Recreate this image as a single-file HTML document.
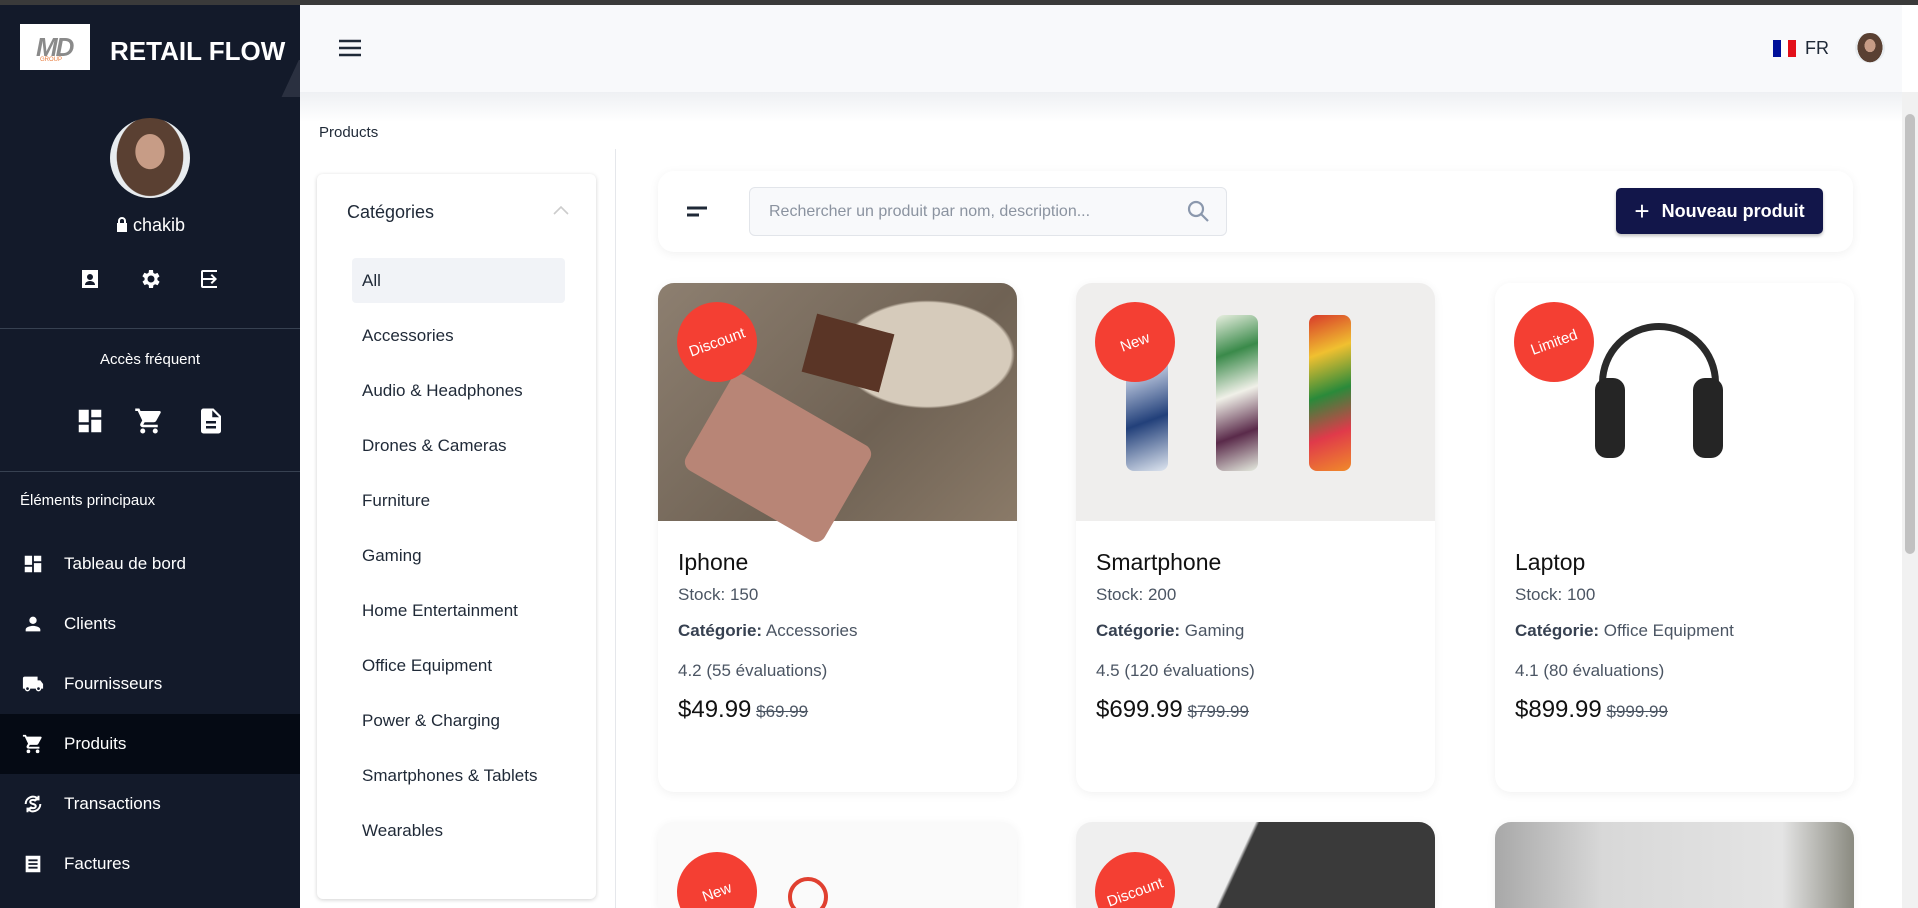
<!DOCTYPE html>
<html><head><meta charset="utf-8"><style>
*{box-sizing:border-box;margin:0;padding:0}
html,body{width:1918px;height:908px;overflow:hidden}
body{background:#fff;font-family:"Liberation Sans",sans-serif;position:relative;color:#1f2937}
.abs{position:absolute}
.topline{left:0;top:0;width:1918px;height:5px;background:#3a3a3a}
.side{left:0;top:5px;width:300px;height:903px;background:#131a2a;color:#fff}
.topbar{left:300px;top:5px;width:1602px;height:87px;background:#f8f9fb}
.shadowband{left:300px;top:92px;width:1602px;height:30px;background:linear-gradient(#eef0f3,#fff)}
.sb{left:1902px;top:92px;width:16px;height:816px;background:#f1f1f1}
.nav{left:0;width:300px;height:60px;display:flex;align-items:center;font-size:17px}
.nav svg{position:absolute;left:22px}
.nav span{position:absolute;left:64px}
.cat{left:362px;font-size:17px;color:#1f2937}
.card{width:359px;height:509px;background:#fff;border-radius:16px;box-shadow:0 2px 10px rgba(0,0,0,.06);overflow:hidden}
.img{position:absolute;left:0;top:0;width:359px;height:238px}
.badge{position:absolute;left:19px;top:19px;width:80px;height:80px;border-radius:50%;background:#f43f33;color:#fff;font-size:15px;display:flex;align-items:center;justify-content:center}
.badge b{font-weight:normal;transform:rotate(-20deg)}
.t{position:absolute;left:20px;top:266px;font-size:23px;color:#111}
.s{position:absolute;left:20px;font-size:17px;color:#4b5563}
</style></head><body>
<div class="abs topline"></div>
<div class="abs side">
 <div class="abs" style="left:20px;top:19px;width:70px;height:46px;background:#fff"><div style="position:absolute;left:16px;top:8px;font:italic bold 26px 'Liberation Sans';color:#8a8a8a;letter-spacing:-2px">MD</div><div style="position:absolute;left:20px;top:33px;font-size:6px;color:#e87a3a">GROUP</div></div>
 <div class="abs" style="left:110px;top:31px;font-size:26px;font-weight:bold;white-space:nowrap">RETAIL FLOW</div>
 <div class="abs" style="left:280px;top:55px;width:20px;height:37px;background:linear-gradient(115deg,transparent 50%,#2a3040 51%)"></div>
 <div class="abs" style="left:110px;top:113px;width:80px;height:80px;border-radius:50%;background:radial-gradient(ellipse 30% 36% at 50% 42%,#c79c86 0 60%,transparent 62%),radial-gradient(ellipse 42% 50% at 50% 48%,#5a4032 0 98%,transparent 100%),#e8ecef"></div>
 <div class="abs" style="left:0;top:210px;width:300px;text-align:center;font-size:18px"><svg width="14" height="16" viewBox="0 0 14 16" style="vertical-align:-1px;margin-right:4px"><path d="M3 7V5a4 4 0 0 1 8 0v2h1v9H2V7zm2 0h4V5a2 2 0 0 0-4 0z" fill="#fff"/></svg>chakib</div>
 <svg class="abs" style="left:78px;top:262px" width="24" height="24" viewBox="0 0 24 24" fill="#fff"><path d="M4 3h16v18H4z M12 7a3 3 0 1 0 0 6 3 3 0 0 0 0-6zM7 18h10c0-3-3-4-5-4s-5 1-5 4z" fill-rule="evenodd"/></svg>
 <svg class="abs" style="left:138px;top:262px" width="24" height="24" viewBox="0 0 24 24" fill="#fff"><path d="M19.4 13a7.5 7.5 0 0 0 0-2l2.1-1.6-2-3.5-2.5 1a7 7 0 0 0-1.7-1L15 3h-4l-.4 2.7a7 7 0 0 0-1.7 1l-2.5-1-2 3.5L6.6 11a7.5 7.5 0 0 0 0 2l-2.1 1.6 2 3.5 2.5-1a7 7 0 0 0 1.7 1L11 21h4l.4-2.7a7 7 0 0 0 1.7-1l2.5 1 2-3.5zM13 15.5a3.5 3.5 0 1 1 0-7 3.5 3.5 0 0 1 0 7z"/></svg>
 <svg class="abs" style="left:198px;top:262px" width="24" height="24" viewBox="0 0 24 24" fill="#fff"><path d="M10 17l1.4-1.4L8.8 13H19v-2H8.8l2.6-2.6L10 7l-5 5zM5 3h14a2 2 0 0 1 2 2v14a2 2 0 0 1-2 2H5v-2h14V5H5z" transform="matrix(-1 0 0 1 24 0)"/></svg>
 <div class="abs" style="left:0;top:323px;width:300px;height:1px;background:#374151"></div>
 <div class="abs" style="left:0;top:346px;width:300px;text-align:center;font-size:15px">Accès fréquent</div>
 <svg class="abs" style="left:75px;top:401px" width="30" height="30" viewBox="0 0 24 24" fill="#fff"><path d="M3 13h8V3H3zm0 8h8v-6H3zm10 0h8V11h-8zm0-18v6h8V3z"/></svg>
 <svg class="abs" style="left:134px;top:401px" width="30" height="30" viewBox="0 0 24 24" fill="#fff"><path d="M7 18a2 2 0 1 0 0 4 2 2 0 0 0 0-4zM1 2v2h2l3.6 7.6-1.4 2.4A2 2 0 0 0 7 17h12v-2H7.4l1.1-2h7.5a2 2 0 0 0 1.7-1l3.6-6.5A1 1 0 0 0 20.4 4H5.2l-.9-2zm16 16a2 2 0 1 0 0 4 2 2 0 0 0 0-4z"/></svg>
 <svg class="abs" style="left:196px;top:401px" width="30" height="30" viewBox="0 0 24 24" fill="#fff"><path d="M14 2H6a2 2 0 0 0-2 2v16a2 2 0 0 0 2 2h12a2 2 0 0 0 2-2V8zm2 16H8v-2h8zm0-4H8v-2h8zm-3-5V3.5L18.5 9z"/></svg>
 <div class="abs" style="left:0;top:466px;width:300px;height:1px;background:#374151"></div>
 <div class="abs" style="left:20px;top:487px;font-size:15px">Éléments principaux</div>
 <div class="abs nav" style="top:529px"><svg width="22" height="22" viewBox="0 0 24 24" fill="#fff"><path d="M3 13h8V3H3zm0 8h8v-6H3zm10 0h8V11h-8zm0-18v6h8V3z"/></svg><span>Tableau de bord</span></div>
 <div class="abs nav" style="top:589px"><svg width="22" height="22" viewBox="0 0 24 24" fill="#fff"><path d="M12 12a4 4 0 1 0 0-8 4 4 0 0 0 0 8zm0 2c-2.7 0-8 1.3-8 4v2h16v-2c0-2.7-5.3-4-8-4z"/></svg><span>Clients</span></div>
 <div class="abs nav" style="top:649px"><svg width="22" height="22" viewBox="0 0 24 24" fill="#fff"><path d="M20 8h-3V4H3a2 2 0 0 0-2 2v11h2a3 3 0 0 0 6 0h6a3 3 0 0 0 6 0h2v-5zM6 18.5a1.5 1.5 0 1 1 0-3 1.5 1.5 0 0 1 0 3zm12 0a1.5 1.5 0 1 1 0-3 1.5 1.5 0 0 1 0 3z"/></svg><span>Fournisseurs</span></div>
 <div class="abs nav" style="top:709px;background:#050a14"><svg width="22" height="22" viewBox="0 0 24 24" fill="#fff"><path d="M7 18a2 2 0 1 0 0 4 2 2 0 0 0 0-4zM1 2v2h2l3.6 7.6-1.4 2.4A2 2 0 0 0 7 17h12v-2H7.4l1.1-2h7.5a2 2 0 0 0 1.7-1l3.6-6.5A1 1 0 0 0 20.4 4H5.2l-.9-2zm16 16a2 2 0 1 0 0 4 2 2 0 0 0 0-4z"/></svg><span>Produits</span></div>
 <div class="abs nav" style="top:769px"><svg width="22" height="22" viewBox="0 0 24 24" fill="none" stroke="#fff" stroke-width="2.2"><path d="M4 12a8 8 0 0 1 14-5.3M20 12a8 8 0 0 1-14 5.3M18 3v4h-4M6 21v-4h4M15 9c-.5-1-1.6-1.5-3-1.5-2 0-3 1-3 2.2 0 3 6 1.6 6 4.6 0 1.2-1 2.2-3 2.2-1.5 0-2.5-.6-3-1.5"/></svg><span>Transactions</span></div>
 <div class="abs nav" style="top:829px"><svg width="22" height="22" viewBox="0 0 24 24" fill="#fff"><path d="M4 3h16v18H4zm3 4v2h10V7zm0 4v2h10v-2zm0 4v2h10v-2z" fill-rule="evenodd"/></svg><span>Factures</span></div>
</div>
<div class="abs topbar">
 <svg class="abs" style="left:38px;top:33px" width="24" height="20" viewBox="0 0 24 20"><path d="M1 3h22M1 10h22M1 17h22" stroke="#1f2937" stroke-width="2.4"/></svg>
 <div class="abs" style="left:1473px;top:35px;width:8px;height:17px;background:#00109a"></div>
 <div class="abs" style="left:1481px;top:35px;width:7px;height:17px;background:#fff"></div>
 <div class="abs" style="left:1488px;top:35px;width:8px;height:17px;background:#e3101a"></div>
 <div class="abs" style="left:1505px;top:33px;font-size:18px;color:#1f2937">FR</div>
 <div class="abs" style="left:1555px;top:28px;width:30px;height:30px;border-radius:50%;background:radial-gradient(ellipse 30% 36% at 50% 42%,#c79c86 0 60%,transparent 62%),radial-gradient(ellipse 42% 50% at 50% 48%,#5a4032 0 98%,transparent 100%),#e8ecef"></div>
</div>
<div class="abs shadowband"></div>
<div class="abs sb"><div style="position:absolute;left:3px;top:22px;width:10px;height:440px;background:#c1c1c1;border-radius:5px"></div></div>
<div class="abs" style="left:319px;top:124px;font-size:15px">Products</div>
<div class="abs" style="left:615px;top:149px;width:1px;height:759px;background:#e5e7eb"></div>
<div class="abs" style="left:317px;top:174px;width:279px;height:725px;background:#fff;border-radius:6px;box-shadow:0 1px 4px rgba(0,0,0,.18)"></div>
<div class="abs" style="left:347px;top:202px;font-size:18px">Catégories</div>
<svg class="abs" style="left:553px;top:205px" width="16" height="10" viewBox="0 0 16 10"><path d="M1 9l7-7 7 7" stroke="#ccc" stroke-width="1.6" fill="none"/></svg>
<div class="abs" style="left:352px;top:258px;width:213px;height:45px;background:#f1f3f7;border-radius:4px"></div>
<div class="abs cat" style="top:271px">All</div>
<div class="abs cat" style="top:326px">Accessories</div>
<div class="abs cat" style="top:381px">Audio &amp; Headphones</div>
<div class="abs cat" style="top:436px">Drones &amp; Cameras</div>
<div class="abs cat" style="top:491px">Furniture</div>
<div class="abs cat" style="top:546px">Gaming</div>
<div class="abs cat" style="top:601px">Home Entertainment</div>
<div class="abs cat" style="top:656px">Office Equipment</div>
<div class="abs cat" style="top:711px">Power &amp; Charging</div>
<div class="abs cat" style="top:766px">Smartphones &amp; Tablets</div>
<div class="abs cat" style="top:821px">Wearables</div>
<div class="abs" style="left:658px;top:171px;width:1195px;height:81px;background:#fff;border-radius:16px;box-shadow:0 2px 10px rgba(0,0,0,.06)"></div>
<svg class="abs" style="left:687px;top:206px" width="22" height="12"><path d="M0 2h20M0 9h12" stroke="#1f2937" stroke-width="3"/></svg>
<div class="abs" style="left:749px;top:187px;width:478px;height:49px;background:#f8f9fb;border:1px solid #e2e5ea;border-radius:6px"></div>
<div class="abs" style="left:769px;top:203px;font-size:16px;color:#8b93a0">Rechercher un produit par nom, description...</div>
<svg class="abs" style="left:1186px;top:199px" width="24" height="24" viewBox="0 0 24 24" fill="none" stroke="#8b98ad" stroke-width="2.2"><circle cx="10" cy="10" r="7"/><path d="M15 15l7 7"/></svg>
<div class="abs" style="left:1616px;top:188px;width:207px;height:46px;background:#12164a;border-radius:5px;color:#fff;font-size:18px;font-weight:bold;display:flex;align-items:center;justify-content:center;box-shadow:0 2px 3px rgba(0,0,0,.25)"><span style="font-size:26px;font-weight:normal;margin-right:12px">+</span>Nouveau produit</div>

<div class="abs card" style="left:658px;top:283px">
 <div class="img" style="background:radial-gradient(ellipse at 75% 30%,#d6cbbb 0 22%,transparent 23%),linear-gradient(135deg,#8d7f70,#6f6254 60%,#8a7a68)"></div>
 <div class="abs" style="left:150px;top:40px;width:80px;height:60px;background:#5a3526;transform:rotate(15deg)"></div>
 <div class="abs" style="left:40px;top:120px;width:160px;height:110px;background:#b88576;border-radius:10px;transform:rotate(30deg)"></div>
 <div class="badge"><b>Discount</b></div>
 <div class="t">Iphone</div><div class="s" style="top:302px">Stock: 150</div>
 <div class="s" style="top:338px"><b style="color:#374151">Catégorie:</b> Accessories</div>
 <div class="s" style="top:378px">4.2 (55 évaluations)</div>
 <div class="s" style="top:413px"><span style="font-size:24px;color:#111">$49.99</span> <s>$69.99</s></div>
</div>
<div class="abs card" style="left:1076px;top:283px">
 <div class="img" style="background:#efeeed"></div>
 <div class="abs" style="left:50px;top:32px;width:42px;height:156px;border-radius:8px;background:linear-gradient(160deg,#2b4a8a,#cfd8ea,#22407a,#dfe6f0)"></div>
 <div class="abs" style="left:140px;top:32px;width:42px;height:156px;border-radius:8px;background:linear-gradient(160deg,#e8efe0,#3a8a4a,#f0f0e8,#5a2a4a,#e6ece0)"></div>
 <div class="abs" style="left:233px;top:32px;width:42px;height:156px;border-radius:8px;background:linear-gradient(160deg,#d83a2a,#f0c030,#2a8a3a,#e03a4a,#f08a2a)"></div>
 <div class="badge"><b>New</b></div>
 <div class="t">Smartphone</div><div class="s" style="top:302px">Stock: 200</div>
 <div class="s" style="top:338px"><b style="color:#374151">Catégorie:</b> Gaming</div>
 <div class="s" style="top:378px">4.5 (120 évaluations)</div>
 <div class="s" style="top:413px"><span style="font-size:24px;color:#111">$699.99</span> <s>$799.99</s></div>
</div>
<div class="abs card" style="left:1495px;top:283px">
 <div class="img" style="background:#fff"></div>
 <div class="abs" style="left:104px;top:40px;width:120px;height:130px;border:7px solid #2a2a2a;border-bottom:none;border-radius:60px 60px 0 0"></div>
 <div class="abs" style="left:100px;top:95px;width:30px;height:80px;border-radius:12px;background:#252525"></div>
 <div class="abs" style="left:198px;top:95px;width:30px;height:80px;border-radius:12px;background:#252525"></div>
 <div class="badge"><b>Limited</b></div>
 <div class="t">Laptop</div><div class="s" style="top:302px">Stock: 100</div>
 <div class="s" style="top:338px"><b style="color:#374151">Catégorie:</b> Office Equipment</div>
 <div class="s" style="top:378px">4.1 (80 évaluations)</div>
 <div class="s" style="top:413px"><span style="font-size:24px;color:#111">$899.99</span> <s>$999.99</s></div>
</div>
<div class="abs card" style="left:658px;top:822px;height:86px;border-radius:16px 16px 0 0;background:#fafafa"><div class="badge" style="top:30px"><b>New</b></div><div class="abs" style="left:130px;top:55px;width:40px;height:40px;border:4px solid #e04030;border-radius:50%"></div></div>
<div class="abs card" style="left:1076px;top:822px;height:86px;border-radius:16px 16px 0 0;background:linear-gradient(115deg,#efefef 45%,#3a3a3a 46%)"><div class="badge" style="top:30px"><b>Discount</b></div></div>
<div class="abs card" style="left:1495px;top:822px;height:86px;border-radius:16px 16px 0 0;background:linear-gradient(90deg,#a8a8a8,#d8d8d8 30%,#e4e4e4 80%,#8a8a80)"></div>
</body></html>
